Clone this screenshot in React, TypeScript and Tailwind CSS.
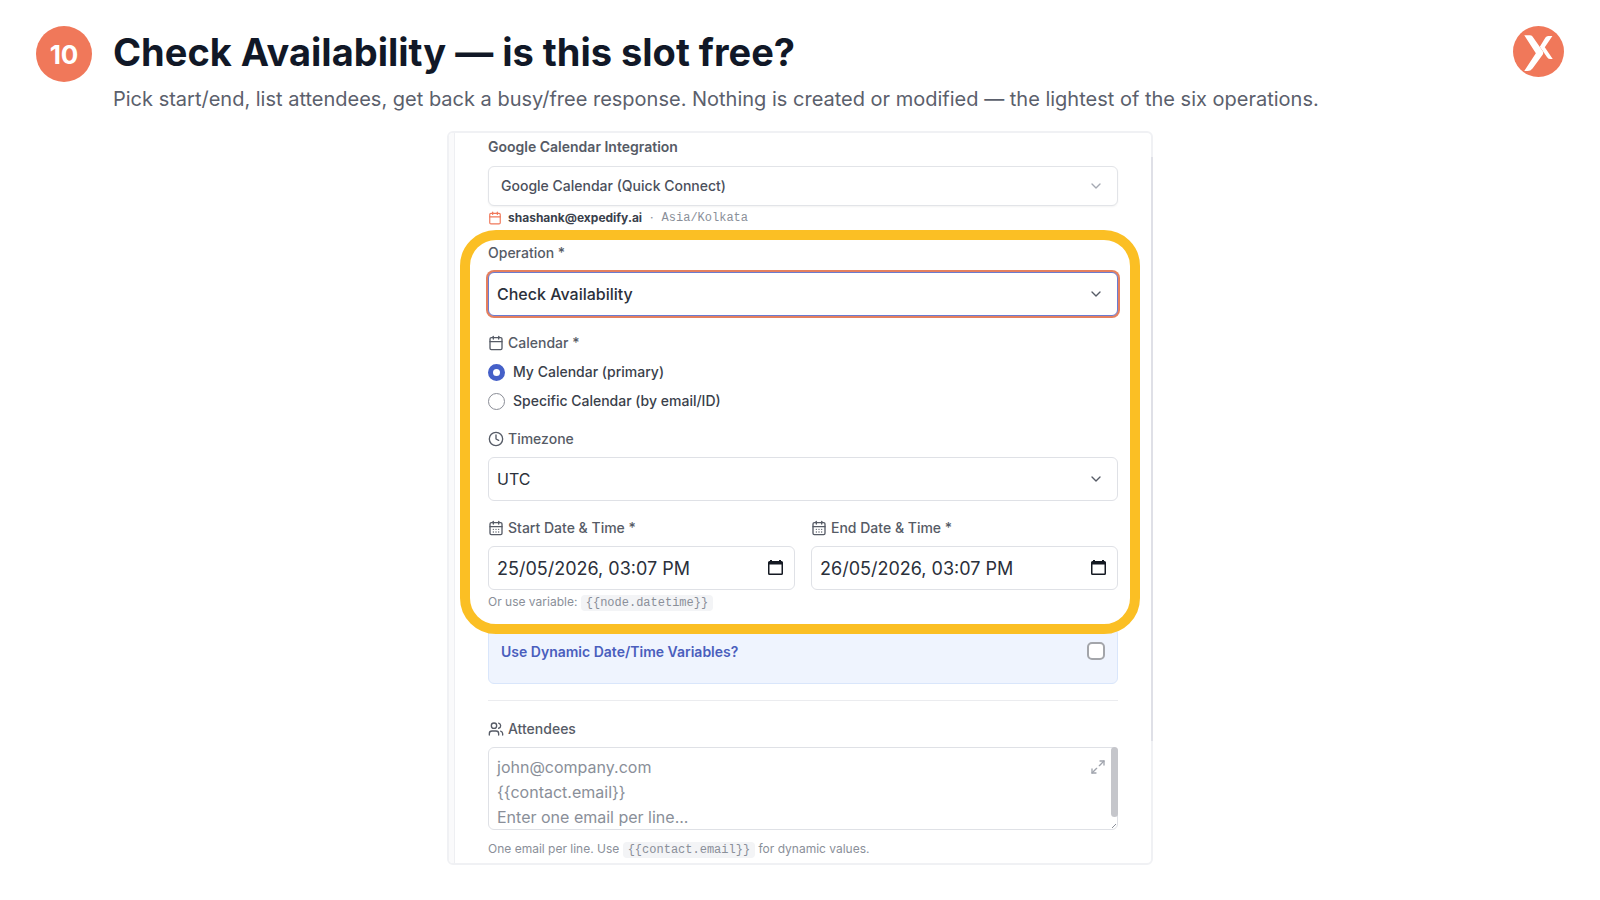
import React, { useState } from "react";
import {
  Calendar,
  CalendarDays,
  ChevronDown,
  Clock,
  Maximize2,
  Users,
} from "lucide-react";

const labelClass =
  "flex items-center gap-1 text-sm leading-5 font-medium text-[#565b66]";
const iconClass = "w-4 h-4 shrink-0";
const fieldClass =
  "w-full h-11 px-2 bg-white border border-[#dfe1e6] rounded-md text-[#2b303b] outline-none";
const codeClass =
  "px-[5px] py-[1px] rounded bg-[#f3f4f6] font-['Liberation_Mono',monospace] text-xs";

function Logo() {
  return (
    <svg className="w-[51px] h-[51px] shrink-0" viewBox="0 0 154 154">
      <circle cx="77" cy="77" r="77" fill="#f0785a" />
      <path
        d="M34 28H51Q56 28 59 32L90 76Q93 81 90 86L59 128Q53 136 44 136H34L69 82Z"
        fill="#fff"
      />
      <path
        d="M119 30H106Q101 30 98 35L81 63L103 94Q107 100 113 100H120L96 64Z"
        fill="#fff"
      />
    </svg>
  );
}

// same glyph the browser shows in its native date fields
function PickerIcon() {
  return (
    <svg className="w-[15px] h-4" viewBox="0 0 15 16" fill="#141922">
      <path
        fillRule="evenodd"
        d="M2 1V0H4V1H11V0H13V1H13.5A1.5 1.5 0 0 1 15 2.5V13.5A1.5 1.5 0 0 1 13.5 15H1.5A1.5 1.5 0 0 1 0 13.5V2.5A1.5 1.5 0 0 1 1.5 1ZM1.5 4.500V13.500H13.500V4.500Z"
      />
    </svg>
  );
}

interface SelectFieldProps {
  id: string;
  options: string[];
  className: string;
  chevronClass: string;
}

function SelectField({ id, options, className, chevronClass }: SelectFieldProps) {
  return (
    <div className="relative">
      <select id={id} className={`appearance-none block ${className}`}>
        {options.map((option) => (
          <option key={option}>{option}</option>
        ))}
      </select>
      <ChevronDown
        className={`absolute top-1/2 right-[14px] -translate-y-1/2 pointer-events-none ${chevronClass}`}
      />
    </div>
  );
}

interface DateFieldProps {
  id: string;
  label: string;
  initial: string;
}

function DateField({ id, label, initial }: DateFieldProps) {
  const [value, setValue] = useState(initial);

  return (
    <div className="flex-1 min-w-0">
      <label htmlFor={id} className={labelClass}>
        <CalendarDays className={iconClass} />
        {label}
      </label>
      <div className="relative mt-2">
        <input
          id={id}
          type="text"
          value={value}
          onChange={(e) => setValue(e.target.value)}
          className={`${fieldClass} text-lg`}
        />
        <button
          type="button"
          aria-label={`Pick ${label}`}
          className="absolute top-1/2 right-3 -translate-y-1/2"
        >
          <PickerIcon />
        </button>
      </div>
    </div>
  );
}

export default function App() {
  const [target, setTarget] = useState("primary");
  const [dynamic, setDynamic] = useState(false);

  const targets = [
    { id: "primary", label: "My Calendar (primary)" },
    { id: "specific", label: "Specific Calendar (by email/ID)" },
  ];

  return (
    <div className="min-h-screen bg-white font-['Inter',sans-serif] pb-8">
      <header className="flex items-start px-9 pt-[26px]">
        <div className="w-14 h-14 shrink-0 rounded-full bg-[#f0785a] flex items-center justify-center text-white text-[26px] font-bold">
          10
        </div>
        <div className="flex-1 ml-[21px] pt-1">
          <h1 className="text-[38px] leading-[44px] font-bold text-[#111827]">
            Check Availability — is this slot free?
          </h1>
          <p className="mt-[11px] text-xl leading-7 text-[#5b606c]">
            Pick start/end, list attendees, get back a busy/free response. Nothing
            is created or modified — the lightest of the six operations.
          </p>
        </div>
        <Logo />
      </header>

      <main className="relative max-w-[706px] mx-auto mt-[18px] border-2 border-[#f0f1f4] rounded-md flex">
        <div className="w-[6px] shrink-0 rounded-l bg-[#fafafb] border-r border-[#eeeff2]"></div>
        <form className="flex-1 min-w-0 pt-1 pb-1 px-[33px]">
          <label
            htmlFor="integration"
            className="block text-sm leading-5 font-semibold text-[#565b66]"
          >
            Google Calendar Integration
          </label>
          <div className="mt-[9px]">
            <SelectField
              id="integration"
              options={["Google Calendar (Quick Connect)"]}
              className="w-full h-10 px-3 bg-white border border-[#e2e4e8] rounded-md shadow-xs text-sm text-[#4b505c] font-medium outline-none"
              chevronClass="w-4 h-4 text-[#a5a9b2]"
            />
          </div>
          <div className="mt-[2px] flex items-center leading-5 text-xs">
            <Calendar className="w-[14px] h-[14px] text-[#f0785a]" />
            <span className="ml-[6px] font-bold text-[#3a3f4b]">
              shashank@expedify.ai
            </span>
            <span className="mx-2 text-[#8a8f99]">·</span>
            <span className="font-['Liberation_Mono',monospace] text-[#8a8f99]">
              Asia/Kolkata
            </span>
          </div>

          <section className="relative mt-[15px]">
            <div className="absolute z-10 -top-[13px] -bottom-[22px] -left-7 -right-[22px] border-[10px] border-[#fbbf24] rounded-[36px] pointer-events-none"></div>

            <label htmlFor="operation" className={labelClass}>
              Operation *
            </label>
            <div className="mt-[9px]">
              <SelectField
                id="operation"
                options={["Check Availability"]}
                className="w-full h-11 px-2 bg-white border border-[#6b7bd0] rounded-md ring-2 ring-[#e5805f] text-base font-medium text-[#2b303b] outline-none"
                chevronClass="w-4 h-4 text-[#565b66]"
              />
            </div>

            <fieldset className="mt-[17px]">
              <legend className={labelClass}>
                <Calendar className={iconClass} />
                Calendar *
              </legend>
              {targets.map((item) => (
                <label
                  key={item.id}
                  className="mt-[9px] flex items-center gap-2 text-sm leading-5 font-medium text-[#3a3f4b]"
                >
                  <input
                    type="radio"
                    name="target"
                    checked={target === item.id}
                    onChange={() => setTarget(item.id)}
                    className="appearance-none w-[17px] h-[17px] rounded-full bg-white border border-[#8a8d96] checked:border-[5px] checked:border-[#4560c8]"
                  />
                  {item.label}
                </label>
              ))}
            </fieldset>

            <label htmlFor="timezone" className={`mt-[18px] ${labelClass}`}>
              <Clock className={iconClass} />
              Timezone
            </label>
            <div className="mt-2">
              <SelectField
                id="timezone"
                options={["UTC"]}
                className={`${fieldClass} text-base`}
                chevronClass="w-4 h-4 text-[#565b66]"
              />
            </div>

            <div className="mt-[17px] flex gap-4">
              <DateField
                id="start"
                label="Start Date & Time *"
                initial="25/05/2026, 03:07 PM"
              />
              <DateField
                id="end"
                label="End Date & Time *"
                initial="26/05/2026, 03:07 PM"
              />
            </div>
            <p className="mt-[2px] text-xs leading-5 text-[#8a8f99]">
              Or use variable: <code className={codeClass}>{"{{node.datetime}}"}</code>
            </p>
          </section>

          <div className="mt-4 h-14 px-3 pt-[13px] flex items-start justify-between bg-[#eff4fe] border border-[#d9e6fb] rounded-md">
            <label
              htmlFor="dynamic"
              className="text-sm leading-5 font-semibold text-[#4a5ebd]"
            >
              Use Dynamic Date/Time Variables?
            </label>
            <input
              id="dynamic"
              type="checkbox"
              checked={dynamic}
              onChange={(e) => setDynamic(e.target.checked)}
              className="appearance-none w-[18px] h-[18px] bg-white border-2 border-[#a3a5aa] rounded-[5px] checked:bg-[#4560c8]"
            />
          </div>

          <hr className="mt-4 border-[#ebecef]" />

          <label htmlFor="attendees" className={`mt-[18px] ${labelClass}`}>
            <Users className={iconClass} />
            Attendees
          </label>
          <div className="relative mt-2">
            <textarea
              id="attendees"
              rows={3}
              placeholder={
                "john@company.com\n{{contact.email}}\nEnter one email per line..."
              }
              className="block w-full h-[83px] px-2 pt-[7px] border border-[#dfe1e6] rounded-md text-base leading-[25px] placeholder:text-[#8a8f99] resize-none overflow-hidden outline-none"
            />
            <button
              type="button"
              aria-label="Expand"
              className="absolute top-3 right-3 text-[#a0a4ad]"
            >
              <Maximize2 className="w-4 h-4" />
            </button>
            <div className="absolute top-0 right-0 w-[7px] h-[70px] rounded-full bg-[#c5c6cb]"></div>
            <svg
              className="absolute bottom-[2px] right-[2px] w-1 h-1"
              viewBox="0 0 4 4"
              stroke="#8a8f99"
            >
              <path d="M0 4L4 0" />
            </svg>
          </div>
          <p className="mt-[9px] text-xs leading-5 text-[#8a8f99]">
            One email per line. Use{" "}
            <code className={codeClass}>{"{{contact.email}}"}</code> for dynamic
            values.
          </p>
        </form>
        <div className="absolute top-6 -right-[2px] w-[2px] h-[584px] bg-[#dfe0e7]"></div>
      </main>
    </div>
  );
}
